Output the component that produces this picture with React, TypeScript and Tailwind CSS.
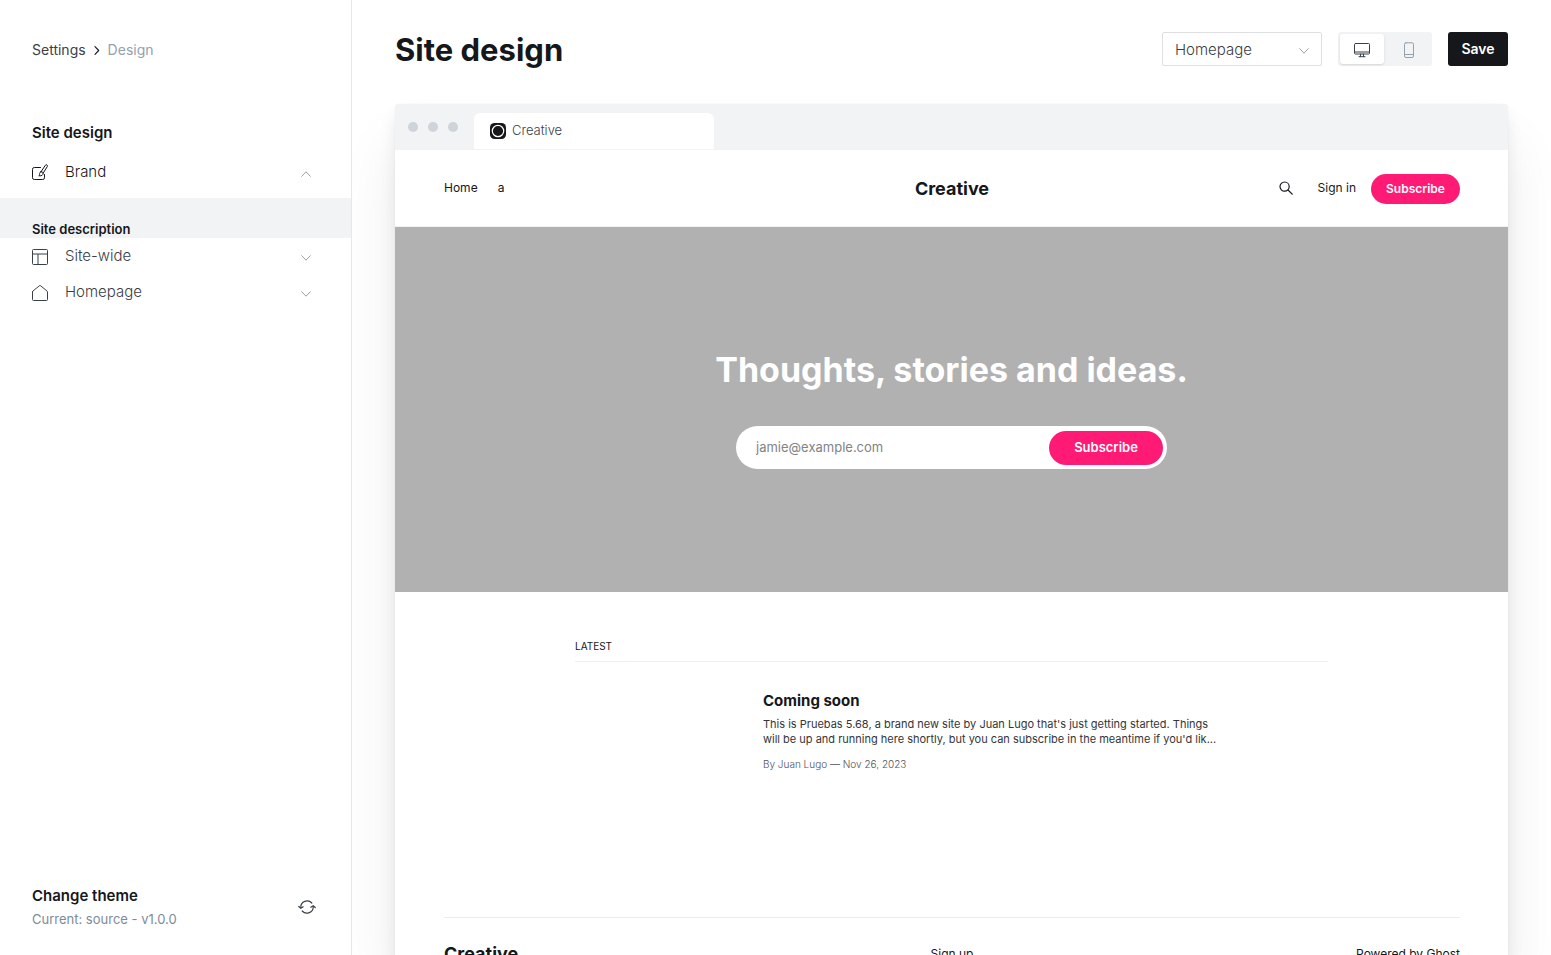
import React from "react";

type IconProps = { className?: string };

const Chevron = ({ className = "" }: IconProps) => (
  <svg className={className} viewBox="0 0 10 10" width="10" height="10" fill="none" stroke="currentColor" strokeLinecap="round" strokeLinejoin="round" aria-hidden="true">
    <path d="M.7 2.7 5 7.2l4.3-4.5" />
  </svg>
);

const BreadcrumbArrow = () => (
  <svg className="mx-[7px]" viewBox="0 0 8 10" width="8" height="10" fill="none" stroke="currentColor" strokeWidth="1.100" strokeLinecap="round" strokeLinejoin="round" aria-hidden="true">
    <path d="M2 1.700 5.700 5.500 2 9.300" />
  </svg>
);

const BrandIcon = () => (
  <svg viewBox="0 0 16 16" width="16" height="16" fill="none" stroke="currentColor" strokeLinecap="round" strokeLinejoin="round" aria-hidden="true">
    <path d="M8.500 3.500H2.300A1.800 1.800 0 0 0 .5 5.300v8.400a1.800 1.800 0 0 0 1.800 1.800h8.400a1.800 1.800 0 0 0 1.800-1.800V10.500" />
    <path d="M9 7.800 13.300 1.300a1.150 1.150 0 0 1 2 1.200L11.200 9.100" />
    <path d="M9 7.800c1.200.1 2.100.6 2.200 1.300.2 1.800-1.500 3-4.400 2.700 1-.5.700-1.300.8-2.200.1-1 .6-1.700 1.400-1.800z" />
  </svg>
);

const LayoutIcon = () => (
  <svg viewBox="0 0 16 16" width="16" height="16" fill="none" stroke="currentColor" strokeLinejoin="round" aria-hidden="true">
    <rect x=".5" y=".5" width="15" height="15" rx="1" />
    <path d="M.5 5h15M6 5v10.500" />
  </svg>
);

const HomeIcon = () => (
  <svg viewBox="0 0 16 16" width="16" height="16" fill="none" stroke="currentColor" strokeLinecap="round" strokeLinejoin="round" aria-hidden="true">
    <path d="M.5 6.900v7.600a1 1 0 0 0 1 1h13a1 1 0 0 0 1-1V6.900a1 1 0 0 0-.4-.8L8.700.8a1.100 1.100 0 0 0-1.400 0L.9 6.100a1 1 0 0 0-.4.800z" />
  </svg>
);

const SyncIcon = () => (
  <svg viewBox="0 0 18 16" width="18" height="16" fill="none" stroke="currentColor" strokeWidth="1.200" strokeLinecap="round" strokeLinejoin="round" aria-hidden="true">
    <path d="M2.800 8.500A6.300 6.300 0 0 1 13.800 4M15.200 7.500A6.300 6.300 0 0 1 4.200 12" />
    <path d="M.8 7.500 2.800 9.300l2.400-1.500M12.800 8.200l2.400-1.500 2 1.800" />
  </svg>
);

const DesktopIcon = () => (
  <svg viewBox="0 0 16 16" width="16" height="16" fill="none" stroke="currentColor" strokeLinecap="round" strokeLinejoin="round" aria-hidden="true">
    <rect x=".5" y="1.500" width="15" height="10.500" rx="1" />
    <path d="M.5 10h15M6.700 12l-.4 2.700M9.300 12l.4 2.700M5 14.700h6" />
  </svg>
);

const MobileIcon = () => (
  <svg viewBox="0 0 16 16" width="16" height="16" fill="none" stroke="currentColor" strokeLinecap="round" strokeLinejoin="round" aria-hidden="true">
    <rect x="3.500" y=".8" width="9" height="14.700" rx="1.500" />
    <path d="M3.500 12.500h9" />
  </svg>
);

const SearchIcon = () => (
  <svg viewBox="0 0 14 14" width="14" height="14" fill="none" stroke="currentColor" strokeWidth="1.200" strokeLinecap="round" aria-hidden="true">
    <circle cx="5.600" cy="5.600" r="4.600" />
    <path d="m9 9 4.200 4.200" />
  </svg>
);

const Favicon = () => (
  <svg viewBox="0 0 16 16" width="16" height="16" aria-hidden="true">
    <rect width="16" height="16" rx="4.500" fill="#15171a" />
    <circle cx="8" cy="8" r="5.700" fill="none" stroke="#fff" strokeWidth="1.200" />
  </svg>
);

function SidebarRow({ icon, label, open = false }: { icon: React.ReactNode; label: string; open?: boolean }) {
  return (
    <button type="button" aria-expanded={open} className="flex h-9 w-full items-center pl-8 pr-10 text-left">
      <span className={open ? "text-[#15171a]" : "pt-px text-[#394047]"}>{icon}</span>
      <span className={`ml-[17px] flex-1 text-[15px] leading-5 font-light ${open ? "text-[#15171a]" : "text-[#394047]"}`}>{label}</span>
      <span className="pt-[3px] text-[#95a1ad]">
        <Chevron className={open ? "rotate-180" : ""} />
      </span>
    </button>
  );
}

function Sidebar() {
  return (
    <aside className="flex w-[352px] shrink-0 flex-col border-r border-[#e6e9eb]">
      <nav aria-label="Breadcrumb" className="flex items-center px-8 pt-10 text-sm leading-5">
        <a href="#settings" className="text-[#394047]">Settings</a>
        <BreadcrumbArrow />
        <span className="text-[#95a1ad]">Design</span>
      </nav>
      <h2 className="px-8 pt-[63px] text-[15px] leading-5 font-semibold text-[#15171a]">Site design</h2>
      <div className="pt-[11px]">
        <SidebarRow icon={<BrandIcon />} label="Brand" open />
        <div className="mt-2 h-10 overflow-hidden bg-[#f1f3f4] px-8 pt-[21px]">
          <h3 className="text-[13px] leading-5 font-semibold text-[#15171a]">Site description</h3>
        </div>
        <SidebarRow icon={<LayoutIcon />} label="Site-wide" />
        <SidebarRow icon={<HomeIcon />} label="Homepage" />
      </div>
      <button type="button" className="mt-auto flex items-center justify-between pb-6 pl-8 pr-[35px] text-left">
        <span>
          <span className="block pt-px text-[15px] leading-[23px] font-semibold text-[#15171a]">Change theme</span>
          <span className="block text-[13px] leading-6 text-[#7c8b9a]">Current: source - v1.0.0</span>
        </span>
        <span className="text-[#394047]"><SyncIcon /></span>
      </button>
    </aside>
  );
}

function Toolbar() {
  return (
    <header className="flex h-[66px] items-center pt-8">
      <h1 className="flex-1 pt-[2px] text-[31px] leading-8 font-bold text-[#15171a]">Site design</h1>
      <div className="relative">
        <select aria-label="Page" className="block h-[34px] w-40 appearance-none rounded-xs border border-[#dddfe1] bg-white px-3 pt-[2px] text-[15px] font-light text-[#394047]">
          <option>Homepage</option>
          <option>Post</option>
        </select>
        <Chevron className="pointer-events-none absolute right-[13px] top-[14px] text-[#95a1ad]" />
      </div>
      <div className="ml-4 flex h-[34px] rounded-[3px] bg-[#f1f3f4] p-[2px]">
        <button type="button" aria-label="Desktop" className="flex w-11 items-center justify-center rounded-[3px] bg-white pt-px text-[#394047] shadow-sm"><DesktopIcon /></button>
        <button type="button" aria-label="Mobile" className="flex w-[46px] items-center justify-center pl-1 pt-px text-[#95a1ad]"><MobileIcon /></button>
      </div>
      <button type="button" className="ml-4 h-[34px] w-[60px] rounded-[3px] bg-[#15171a] text-sm font-semibold text-white">Save</button>
    </header>
  );
}

function SitePreview() {
  return (
    <>
      <header className="grid h-[77px] grid-cols-3 items-center border-b border-[#f1f1f1] pl-[49px] pr-12 text-xs text-[#15171a]">
        <nav className="flex gap-5">
          <a href="#home">Home</a>
          <a href="#a">a</a>
        </nav>
        <a href="#home" className="pt-px text-center text-lg font-bold">Creative</a>
        <div className="flex items-center justify-end">
          <button type="button" aria-label="Search"><SearchIcon /></button>
          <a href="#signin" className="ml-[25px]">Sign in</a>
          <a href="#subscribe" className="ml-[15px] mt-px flex h-[30px] w-[89px] items-center justify-center rounded-full bg-[#ff1a75] font-semibold text-white">Subscribe</a>
        </div>
      </header>
      <section className="flex h-[365px] flex-col items-center bg-[#b1b1b1] pt-[121px]">
        <h2 className="text-[34px] leading-[44px] font-bold text-white">Thoughts, stories and ideas.</h2>
        <form className="mt-[34px] flex h-[43px] w-[431px] items-center rounded-full bg-white py-1 pl-5 pr-1">
          <input type="email" aria-label="Email address" placeholder="jamie@example.com" className="min-w-0 flex-1 text-[13px] text-[#15171a] outline-none placeholder:text-[#838383]" />
          <button type="button" className="h-[34px] w-[114px] rounded-full bg-[#ff1a75] text-[13px] font-semibold text-white">Subscribe</button>
        </form>
      </section>
      <section className="mx-auto w-[753px] max-w-full pt-12">
        <h2 className="border-b border-[#f0f0f0] pb-2 text-[10px] leading-[13px] text-[#15171a] uppercase">Latest</h2>
        <article className="ml-[188px] w-[460px] pt-7">
          <h3 className="text-[15px] leading-[22px] font-bold text-[#15171a]">Coming soon</h3>
          <p className="mt-[5px] text-[11px] leading-[15px] text-[#333539]">
            This is Pruebas 5.68, a brand new site by Juan Lugo that's just getting started. Things<br />
            will be up and running here shortly, but you can subscribe in the meantime if you'd lik...
          </p>
          <p className="mt-[10px] text-[10px] leading-[15px] font-light text-[#50515a]">By Juan Lugo — Nov 26, 2023</p>
        </article>
      </section>
      <footer className="ml-[49px] mr-12 mt-[145px] grid grid-cols-3 items-center border-t border-[#ececec] pt-[22px] text-xs text-[#15171a]">
        <a href="#home" className="text-lg font-bold">Creative</a>
        <a href="#signup" className="text-center">Sign up</a>
        <a href="#ghost" className="text-right">Powered by Ghost</a>
      </footer>
    </>
  );
}

export default function App() {
  return (
    <div className="flex h-screen overflow-hidden bg-white font-['Inter',sans-serif] text-[#15171a]">
      <Sidebar />
      <main className="flex min-w-0 flex-1 flex-col overflow-hidden px-[43px]">
        <Toolbar />
        <div className="mt-[38px] flex min-h-0 flex-1 flex-col rounded-t-[4px] shadow-[0_0_1px_rgba(0,0,0,0.12),0_12px_16px_rgba(0,0,0,0.08),0_40px_60px_rgba(0,0,0,0.08)]">
          <div className="flex h-[46px] shrink-0 items-start rounded-t-[4px] bg-[#f1f3f4] pl-[13px]">
            <div className="flex gap-[10px] pt-[18px]" aria-hidden="true">
              <span className="size-[10px] rounded-full bg-[#ced4d9]" />
              <span className="size-[10px] rounded-full bg-[#ced4d9]" />
              <span className="size-[10px] rounded-full bg-[#ced4d9]" />
            </div>
            <div className="ml-4 mt-[9px] flex h-9 w-60 items-center gap-[6px] rounded-t-md bg-white px-4 text-[13px] font-light text-[#394047]">
              <Favicon />
              Creative
            </div>
          </div>
          <div className="min-h-0 flex-1 overflow-hidden bg-white">
            <SitePreview />
          </div>
        </div>
      </main>
    </div>
  );
}
